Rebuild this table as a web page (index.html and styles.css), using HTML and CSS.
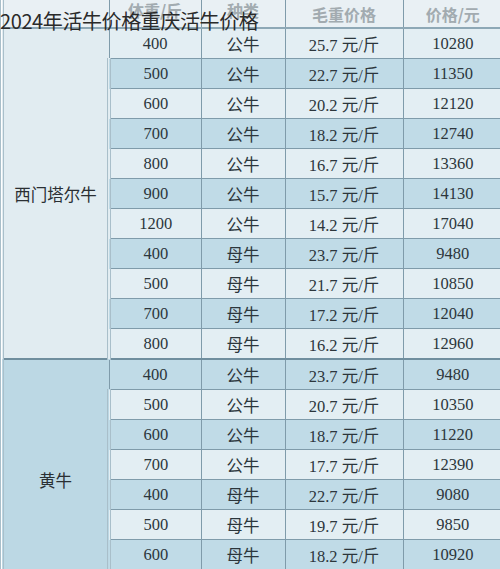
FILE: index.html
```html
<!DOCTYPE html>
<html lang="zh-CN">
<head>
<meta charset="utf-8">
<title>2024年活牛价格重庆活牛价格</title>
<link rel="stylesheet" href="styles.css">
</head>
<body>
<div class="page">
  <h1 class="title">2024年活牛价格重庆活牛价格</h1>
  <table class="price-table">
    <colgroup>
      <col class="c-breed">
      <col class="c-weight">
      <col class="c-type">
      <col class="c-unit">
      <col class="c-total">
    </colgroup>
    <thead>
      <tr>
        <th class="breed-head"></th>
        <th class="under-title">体重/斤</th>
        <th class="under-title">种类</th>
        <th>毛重价格</th>
        <th>价格/元</th>
      </tr>
    </thead>
    <tbody class="group group-a">
      <tr class="light"><td class="breed" rowspan="11">西门塔尔牛</td><td>400</td><td>公牛</td><td>25.7 元/斤</td><td>10280</td></tr>
      <tr class="dark"><td>500</td><td>公牛</td><td>22.7 元/斤</td><td>11350</td></tr>
      <tr class="light"><td>600</td><td>公牛</td><td>20.2 元/斤</td><td>12120</td></tr>
      <tr class="dark"><td>700</td><td>公牛</td><td>18.2 元/斤</td><td>12740</td></tr>
      <tr class="light"><td>800</td><td>公牛</td><td>16.7 元/斤</td><td>13360</td></tr>
      <tr class="dark"><td>900</td><td>公牛</td><td>15.7 元/斤</td><td>14130</td></tr>
      <tr class="light"><td>1200</td><td>公牛</td><td>14.2 元/斤</td><td>17040</td></tr>
      <tr class="dark"><td>400</td><td>母牛</td><td>23.7 元/斤</td><td>9480</td></tr>
      <tr class="light"><td>500</td><td>母牛</td><td>21.7 元/斤</td><td>10850</td></tr>
      <tr class="dark"><td>700</td><td>母牛</td><td>17.2 元/斤</td><td>12040</td></tr>
      <tr class="light"><td>800</td><td>母牛</td><td>16.2 元/斤</td><td>12960</td></tr>
    </tbody>
    <tbody class="group group-b">
      <tr class="dark"><td class="breed" rowspan="8">黄牛</td><td>400</td><td>公牛</td><td>23.7 元/斤</td><td>9480</td></tr>
      <tr class="light"><td>500</td><td>公牛</td><td>20.7 元/斤</td><td>10350</td></tr>
      <tr class="dark"><td>600</td><td>公牛</td><td>18.7 元/斤</td><td>11220</td></tr>
      <tr class="light"><td>700</td><td>公牛</td><td>17.7 元/斤</td><td>12390</td></tr>
      <tr class="dark"><td>400</td><td>母牛</td><td>22.7 元/斤</td><td>9080</td></tr>
      <tr class="light"><td>500</td><td>母牛</td><td>19.7 元/斤</td><td>9850</td></tr>
      <tr class="dark"><td>600</td><td>母牛</td><td>18.2 元/斤</td><td>10920</td></tr>
      <tr class="light"><td></td><td></td><td></td><td></td></tr>
    </tbody>
  </table>
</div>
</body>
</html>
```
FILE: styles.css
```css
html, body {
  margin: 0;
  padding: 0;
  background: #ffffff;
}

.page {
  position: relative;
  width: 500px;
  overflow: hidden;
}

.title {
  position: absolute;
  top: 0;
  left: 0;
  margin: 0;
  padding-top: 7px;
  font-family: "Noto Sans CJK SC", "Noto Sans", sans-serif;
  font-size: 20px;
  font-weight: normal;
  line-height: 28px;
  color: #2a2a2a;
  white-space: nowrap;
  letter-spacing: -0.4px;
  z-index: 2;
}

.price-table {
  width: 500px;
  table-layout: fixed;
  border-collapse: collapse;
  font-family: "Liberation Serif", "Noto Sans CJK SC", serif;
  font-size: 16.5px;
  color: #2c363c;
}

.c-breed { width: 107px; }
.c-weight { width: 92px; }
.c-type { width: 84px; }
.c-unit { width: 118px; }
.c-total { width: 99px; }

.price-table th,
.price-table td {
  padding: 0;
  text-align: center;
  vertical-align: middle;
  border: 1px solid #7f9baa;
}

.price-table th {
  height: 27px;
  background: #e9f0f4;
  color: #a2abb0;
  font-family: "Noto Sans CJK SC", sans-serif;
  font-weight: bold;
  font-size: 16px;
  border-top: none;
  border-bottom: 2px solid #8ea8b6;
}

.price-table th.under-title {
  vertical-align: top;
  line-height: 20px;
}

.price-table td {
  height: 29px;
}

.price-table tr > :first-child {
  border-left: 4px double #a9bfca;
}

.price-table tr > :last-child {
  border-right: none;
}

.light td {
  background: #e3eef3;
}

.dark td {
  background: #c0dbe7;
}

.breed {
  font-family: "Noto Sans CJK SC", sans-serif;
  color: #2a2f33;
}

.group-a .breed {
  background: #e1ecf1;
}

.group-b .breed {
  background: #bcd8e4;
}

.group-b {
  border-top: 2px solid #6f8e9e;
}
```
